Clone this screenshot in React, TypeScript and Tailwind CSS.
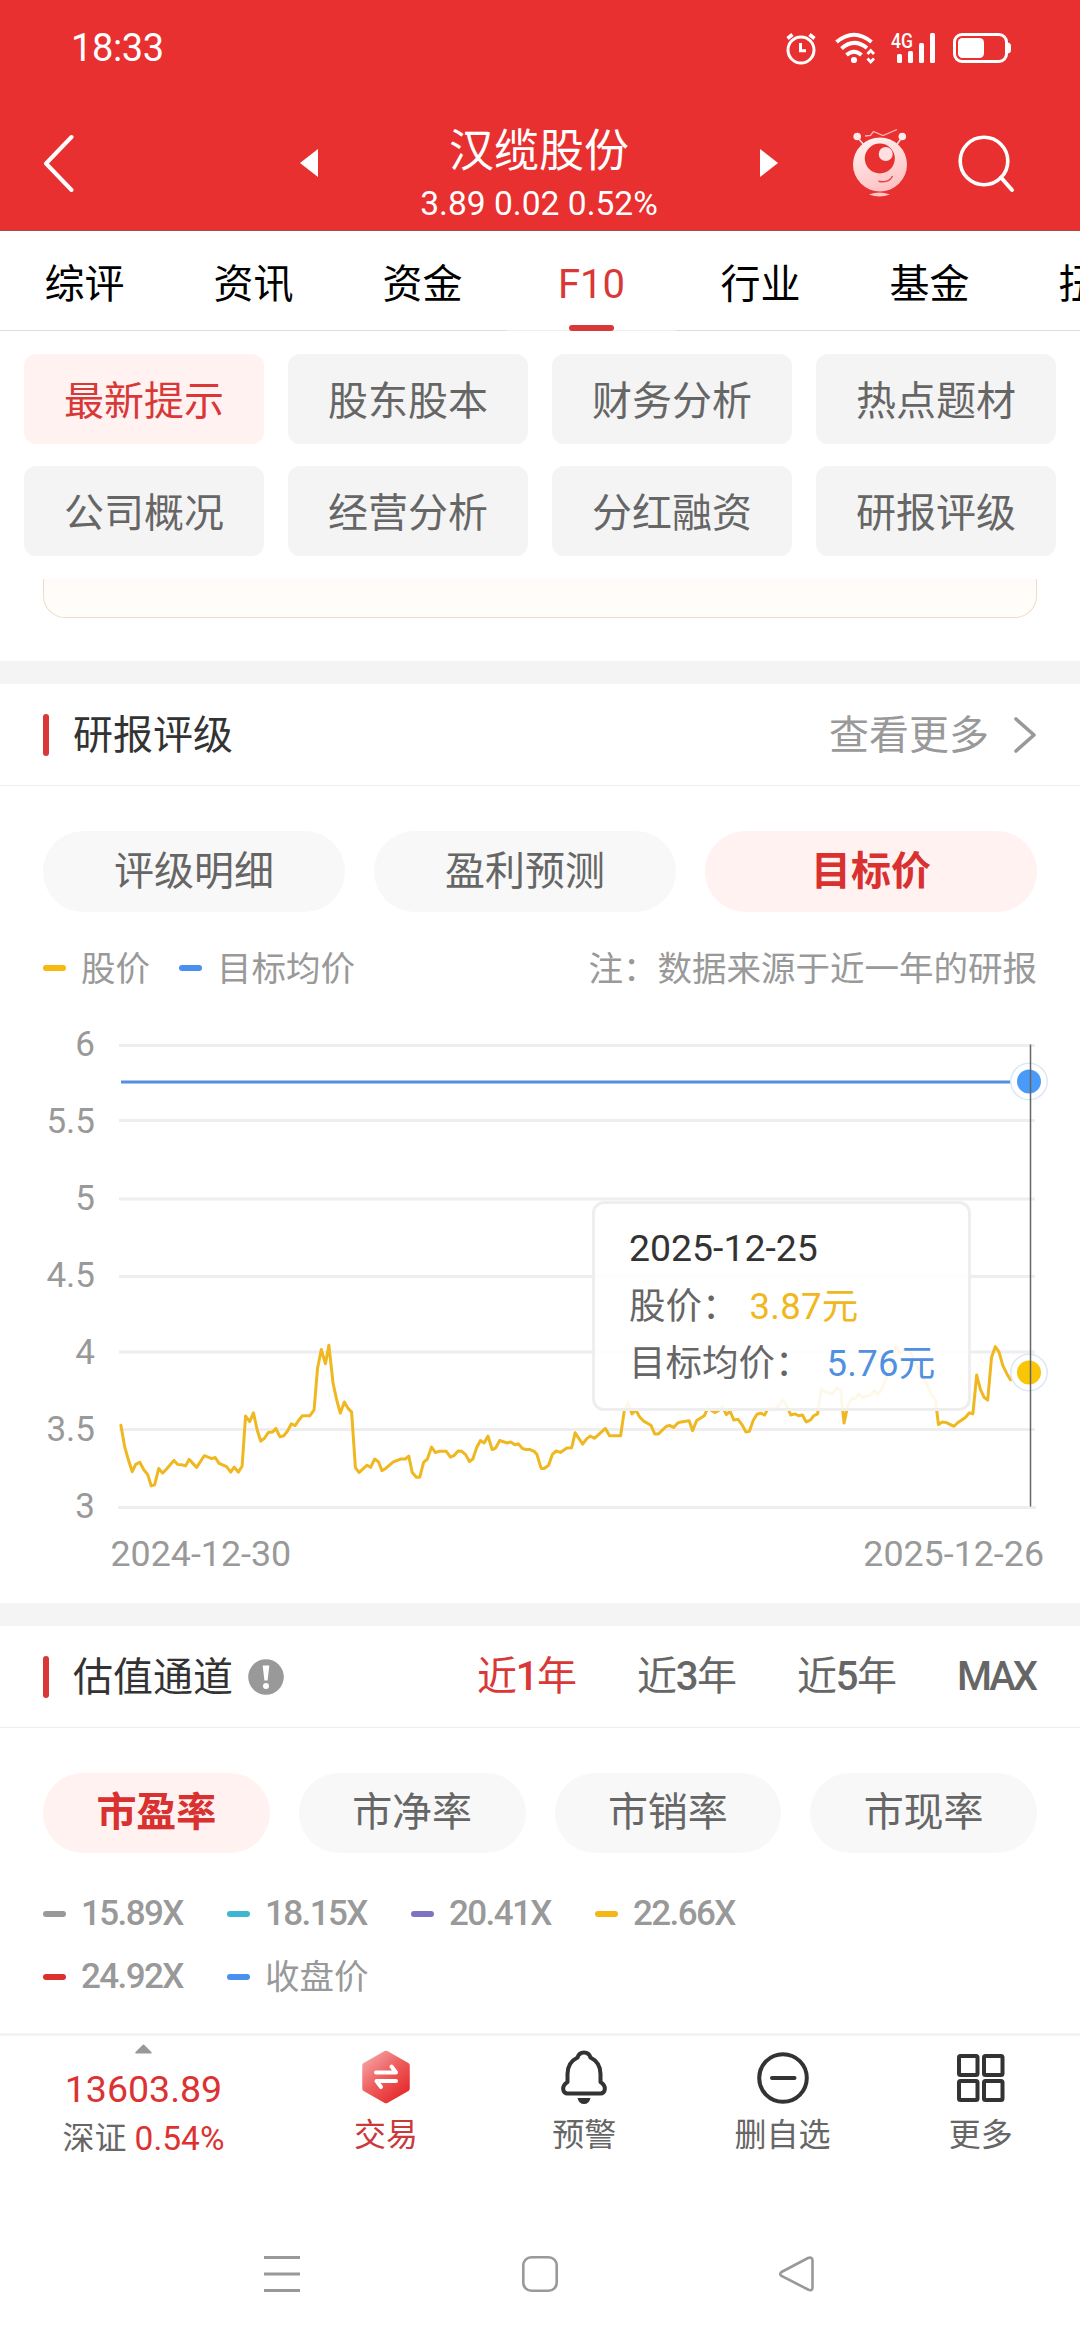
import React from 'react';

const tabs = ['综评', '资讯', '资金', 'F10', '行业', '基金', '扭亏'];

const f10Menu = [
  '最新提示',
  '股东股本',
  '财务分析',
  '热点题材',
  '公司概况',
  '经营分析',
  '分红融资',
  '研报评级',
];

const yAxis = [
  { label: '6', y: 26 },
  { label: '5.5', y: 101 },
  { label: '5', y: 179.5 },
  { label: '4.5', y: 257 },
  { label: '4', y: 332.5 },
  { label: '3.5', y: 410 },
];

const pricePoints =
  '351,1116 362,1175 373,1212 384,1244 394,1224 406,1218 417,1238 429,1252 439,1283 449,1280 461,1235 472,1248 483,1237 505,1213 516,1224 527,1225 539,1228 549,1210 571,1232 593,1200 615,1208 625,1205 636,1221 658,1230 670,1245 680,1231 692,1245 703,1229 713,1091 725,1106 736,1082 747,1130 757,1160 768,1152 779,1136 791,1135 801,1125 813,1148 824,1145 835,1132 846,1112 857,1117 867,1103 878,1090 900,1090 912,1074 922,960 933,908 945,947 955,896 967,1000 978,1048 988,1083 1000,1052 1010,1069 1021,1080 1032,1233 1043,1246 1066,1226 1076,1232 1088,1209 1099,1217 1109,1241 1120,1235 1142,1217 1164,1209 1177,1209 1187,1201 1197,1246 1209,1259 1219,1259 1230,1218 1241,1209 1253,1176 1264,1191 1275,1188 1296,1188 1308,1204 1318,1200 1330,1187 1341,1188 1352,1197 1363,1216 1373,1209 1384,1178 1395,1158 1406,1165 1417,1146 1429,1183 1439,1179 1451,1158 1473,1165 1483,1162 1495,1170 1505,1167 1517,1180 1528,1183 1539,1183 1551,1188 1559,1196 1569,1228 1572,1235 1580,1235 1593,1226 1604,1196 1615,1187 1627,1191 1646,1179 1660,1178 1670,1137 1692,1168 1704,1153 1714,1146 1726,1152 1758,1125 1770,1145 1802,1145 1813,1075 1824,1053 1835,1085 1846,1074 1857,1093 1868,1104 1890,1116 1901,1140 1912,1140 1935,1119 1945,1117 1956,1122 1968,1110 1978,1107 2001,1104 2011,1131 2023,1103 2045,1090 2055,1070 2067,1076 2076,1081 2086,1076 2098,1064 2109,1087 2120,1078 2131,1102 2143,1100 2155,1115 2166,1135 2176,1133 2187,1103 2198,1086 2209,1083 2220,1088 2230,1070 2253,1072 2274,1047 2286,1065 2296,1088 2308,1085 2319,1090 2330,1088 2341,1107 2353,1102 2363,1090 2374,1085 2385,1018 2396,1024 2418,1031 2430,1013 2441,1020 2451,1110 2462,1060 2473,1042 2483,1043 2494,1030 2505,1041 2516,1036 2528,1034 2538,1021 2549,1031 2560,1018 2572,990 2590,940 2602,898 2612,920 2628,905 2643,912 2658,945 2683,985 2703,1030 2716,1045 2725,1114 2736,1107 2748,1109 2770,1119 2780,1110 2803,1095 2815,1082 2825,1085 2836,978 2847,1018 2858,1040 2868,1047 2879,930 2890,900 2901,915 2912,952 2924,975 2934,991 2988,971';

export default function App() {
  return (
    <div className="w-[1080px] h-[2340px] flex flex-col bg-white overflow-hidden font-['Roboto','Noto_Sans_CJK_SC',sans-serif] text-[#333]">
      <header className="h-[231px] bg-[#e83030] border-b border-[#b14747] text-white">
        <StatusBar />
        <TitleBar />
      </header>

      <nav className="h-[100px] flex overflow-hidden">
        {tabs.map((tab) => (
          <Tab key={tab} label={tab} isActive={tab === 'F10'} />
        ))}
      </nav>

      <div className="grid grid-cols-4 gap-x-6 gap-y-[22px] px-6 pt-[23px]">
        {f10Menu.map((item, i) => (
          <button
            key={item}
            className={`h-[90px] rounded-xl text-[40px] leading-none pt-[6px] ${
              i === 0 ? 'bg-[#fff2f1] text-[#d93838]' : 'bg-[#f4f4f4] text-[#666]'
            }`}
          >
            {item}
          </button>
        ))}
      </div>

      <div className="mt-[23px] mx-[43px] h-[39px] rounded-b-[22px] border-x border-b border-[#efdcc6] bg-linear-to-b from-[#fffaf7] to-[#fffefb]" />

      <section className="mt-[43px] border-t-[23px] border-[#f4f4f4]">
        <div className="h-[102px] flex items-center justify-between px-[43px] border-b border-[#eee]">
          <SectionTitle>研报评级</SectionTitle>
          <div className="flex items-center gap-[24px] text-[40px] leading-none text-[#999]">
            <span className="pt-[2px]">查看更多</span>
            <svg width="24" height="36" viewBox="0 0 24 36" fill="none">
              <path
                d="M3 2 L21 18 L3 34"
                stroke="#999"
                strokeWidth="3.6"
                strokeLinecap="round"
                strokeLinejoin="round"
              />
            </svg>
          </div>
        </div>

        <div className="flex gap-[29px] px-[43px] pt-[45px]">
          <Pill className="w-[302px] h-[81px]">评级明细</Pill>
          <Pill className="w-[302px] h-[81px]">盈利预测</Pill>
          <Pill className="flex-1 h-[81px]" isActive>
            目标价
          </Pill>
        </div>

        <div className="h-[108px] flex items-center px-[43px] pt-[4px] text-[34.5px] leading-none text-[#999]">
          <Dash color="bg-[#f5b90f]" />
          <span className="ml-[15px] pt-[2px]">股价</span>
          <Dash color="bg-[#4a90ee]" className="ml-[29px]" />
          <span className="ml-[15px] pt-[2px]">目标均价</span>
          <span className="ml-auto pt-[2px]">注：数据来源于近一年的研报</span>
        </div>

        <PriceChart />
      </section>

      <section className="border-t-[23px] border-[#f4f4f4]">
        <div className="h-[102px] flex items-center px-[43px] border-b border-[#eee]">
          <SectionTitle>估值通道</SectionTitle>
          <svg className="ml-[15px]" width="36" height="36" viewBox="0 0 36 36">
            <circle cx="18" cy="18" r="17.8" fill="#999" />
            <path d="M14.7 6.5 H21.3 L19.6 21.5 H16.4 Z" fill="#fff" />
            <circle cx="18" cy="27" r="3" fill="#fff" />
          </svg>
          <div className="ml-auto flex gap-[59px] text-[40px] leading-none text-[#666]">
            <Range year="1" isActive />
            <Range year="3" />
            <Range year="5" />
            <span className="w-[80px] font-medium tracking-[-3px] whitespace-nowrap">MAX</span>
          </div>
        </div>

        <div className="grid grid-cols-4 gap-[29px] px-[43px] pt-[45px]">
          <Pill className="h-20" isActive>
            市盈率
          </Pill>
          <Pill className="h-20">市净率</Pill>
          <Pill className="h-20">市销率</Pill>
          <Pill className="h-20">市现率</Pill>
        </div>

        <div className="grid grid-cols-[repeat(4,184px)] auto-rows-[63px] pl-[43px] mt-[29px]">
          <BandLegend color="bg-[#999]" label="15.89X" />
          <BandLegend color="bg-[#3fb6d0]" label="18.15X" />
          <BandLegend color="bg-[#7d74c1]" label="20.41X" />
          <BandLegend color="bg-[#f3b816]" label="22.66X" />
          <BandLegend color="bg-[#dc302e]" label="24.92X" />
          <div className="flex items-center text-[34.5px] leading-none text-[#999]">
            <Dash color="bg-[#4a90ee]" />
            <span className="ml-[15px] pt-[2px]">收盘价</span>
          </div>
        </div>
      </section>

      <BottomBar />
      <SystemNav />
    </div>
  );
}

function StatusBar() {
  return (
    <div className="h-24 flex items-center justify-between pl-[71px] pr-[60px]">
      <span className="text-[38px] leading-none tracking-[-0.4px]">18:33</span>
      <svg width="240" height="40" viewBox="0 0 240 40" fill="none">
        <g stroke="#fff" strokeWidth="3">
          <circle cx="21" cy="22" r="13" />
          <path d="M20.5 15 V22.7 H26" />
          <path d="M7.5 10.5 L12.5 6.5 M34.5 10.5 L29.5 6.5" strokeWidth="3.6" />
        </g>
        <g stroke="#fff" strokeWidth="4">
          <path d="M56.5 14 Q74 -0.5 91.5 14" />
          <path d="M61.5 20.5 Q74 9.5 87 20" />
          <path d="M66.5 27 Q74 20.5 81.5 27" />
        </g>
        <circle cx="74" cy="32" r="3.1" fill="#fff" />
        <path
          d="M87.5 26 L90.7 22.5 L94 26 M87.5 30.5 L90.7 34 L94 30.5"
          stroke="#fff"
          strokeWidth="2.8"
        />
        <text x="111" y="20" fill="#fff" fontSize="20" fontWeight="500" textLength="22" lengthAdjust="spacingAndGlyphs">
          4G
        </text>
        <g fill="#fff">
          <rect x="117" y="26" width="5" height="9" rx="1.5" />
          <rect x="128" y="23" width="5" height="12" rx="1.5" />
          <rect x="139" y="15" width="5" height="20" rx="1.5" />
          <rect x="150" y="5" width="5" height="30" rx="1.5" />
          <rect x="178" y="10" width="26" height="20" rx="4.5" />
          <path d="M228 14.5 q3 0.5 3 3.5 v4 q0 3 -3 3.5 Z" />
        </g>
        <rect x="174.5" y="6.5" width="52" height="27" rx="7.5" stroke="#fff" strokeWidth="3" />
      </svg>
    </div>
  );
}

function TitleBar() {
  return (
    <div className="h-[134px] flex items-center pl-[43px]">
      <svg width="32" height="58" viewBox="0 0 32 58" fill="none">
        <path
          d="M28.5 3 L3 29.5 L28.5 56"
          stroke="#fff"
          strokeWidth="4"
          strokeLinecap="round"
          strokeLinejoin="round"
        />
      </svg>
      <svg className="ml-[225px]" width="18" height="28" viewBox="0 0 18 28">
        <path d="M18 0 V28 L0 14 Z" fill="#fff" />
      </svg>
      <div className="w-[442px] flex flex-col items-center pt-[23px]">
        <h1 className="text-[45px] leading-[57px]">汉缆股份</h1>
        <p className="text-[33.6px] leading-[47px]">3.89 0.02 0.52%</p>
      </div>
      <svg width="18" height="28" viewBox="0 0 18 28">
        <path d="M0 0 V28 L18 14 Z" fill="#fff" />
      </svg>
      <svg className="ml-[75px]" width="54" height="70" viewBox="0 0 54 70" fill="none">
        <defs>
          <linearGradient id="robot" x1="0.3" y1="0" x2="0.7" y2="1">
            <stop offset="0" stopColor="#fff0f0" />
            <stop offset="1" stopColor="#ffbfc0" />
          </linearGradient>
        </defs>
        <path d="M12 8 L17.5 7.5 L20.5 3.5 L30 7.5 L44 1.5" stroke="#ffb5b5" strokeWidth="1.3" />
        <path d="M5 10 L11 17 M48.5 10 L43.5 17" stroke="#ffdcdc" strokeWidth="1.6" />
        <circle cx="4.2" cy="8.5" r="3.8" fill="#ffe9e9" />
        <circle cx="49.3" cy="8.5" r="3.8" fill="#ffe9e9" />
        <circle cx="27" cy="36.5" r="27" fill="url(#robot)" />
        <circle cx="26.8" cy="30.5" r="15" fill="#e83030" />
        <circle cx="32.7" cy="26" r="7" fill="#ffdfdf" />
        <path d="M25.5 53.3 Q36 55.5 39.5 48" stroke="#e04848" strokeWidth="1.4" />
        <path d="M16 66.5 Q26.5 62.5 37 66.5 Q26.5 70.5 16 66.5 Z" fill="#ffc4c4" />
      </svg>
      <svg className="ml-[51px]" width="60" height="62" viewBox="0 0 60 62" fill="none">
        <circle cx="26" cy="29" r="23.8" stroke="#fff" strokeWidth="3.6" />
        <path d="M43 45.5 L54 58" stroke="#fff" strokeWidth="4" strokeLinecap="round" />
      </svg>
    </div>
  );
}

function Tab({ label, isActive }: { label: string; isActive: boolean }) {
  return (
    <button
      className={`w-[169px] h-[100px] shrink-0 flex flex-col items-center border-b text-[40px] whitespace-nowrap
        ${isActive ? 'text-[#d93838] border-[#eee]' : 'text-black border-[#ddd]'}`}
    >
      <span className="h-[94px] leading-[107px]">{label}</span>
      {isActive && <span className="w-[45px] h-[6px] shrink-0 rounded-full bg-[#d93838]" />}
    </button>
  );
}

function SectionTitle({ children }: { children: React.ReactNode }) {
  return (
    <div className="flex items-center gap-6">
      <span className="w-[6px] h-[42px] rounded-full bg-[#d93838]" />
      <h2 className="text-[40px] leading-none pt-[2px]">{children}</h2>
    </div>
  );
}

function Pill({
  children,
  className,
  isActive,
}: {
  children: React.ReactNode;
  className: string;
  isActive?: boolean;
}) {
  return (
    <button
      className={`rounded-full text-[40px] leading-none ${className} ${
        isActive ? 'bg-[#fff2f1] text-[#d93030] font-bold' : 'bg-[#f8f8f8] text-[#666]'
      }`}
    >
      {children}
    </button>
  );
}

function Dash({ color, className = '' }: { color: string; className?: string }) {
  return <span className={`w-[23px] h-[6px] rounded-full ${color} ${className}`} />;
}

function Range({ year, isActive }: { year: string; isActive?: boolean }) {
  return (
    <span className={`w-[101px] flex items-center ${isActive ? 'text-[#d93838]' : ''}`}>
      近<span className="w-[20px] font-medium flex justify-center">{year}</span>年
    </span>
  );
}

function BandLegend({ color, label }: { color: string; label: string }) {
  return (
    <div className="flex items-center">
      <Dash color={color} />
      <span className="ml-[15px] text-[35px] leading-none font-medium tracking-[-1.6px] text-[#999]">
        {label}
      </span>
    </div>
  );
}

function PriceChart() {
  return (
    <div className="relative h-[583px]">
      <svg width="1080" height="583" viewBox="0 0.5 1080 583" fill="none">
        {yAxis.map(({ label, y }) => (
          <path key={label} d={`M119 ${y} H1035`} stroke="#eee" strokeWidth="3" />
        ))}
        <path d="M118 488 H1036" stroke="#eee" strokeWidth="3" />

        <g fill="#999" fontSize="35" textAnchor="end">
          <text x="95" y="36">6</text>
          <text x="95" y="113">5.5</text>
          <text x="95" y="190">5</text>
          <text x="95" y="267">4.5</text>
          <text x="95" y="344">4</text>
          <text x="95" y="421">3.5</text>
          <text x="95" y="498">3</text>
        </g>
        <g fill="#999" fontSize="35.8">
          <text x="110.5" y="546">2024-12-30</text>
          <text x="1044" y="546" textAnchor="end">2025-12-26</text>
        </g>

        <path d="M121 62.5 H1030" stroke="#5090e0" strokeWidth="3" />
        <svg width="1080" height="570" viewBox="0 0 3136 1568" preserveAspectRatio="none">
          <polyline
            points={pricePoints}
            stroke="#efb820"
            strokeWidth="3"
            strokeLinejoin="round"
            strokeLinecap="round"
            vectorEffect="non-scaling-stroke"
          />
        </svg>

        <circle cx="1029" cy="62" r="19" fill="#dce8f5" />
        <circle cx="1029" cy="62" r="17.5" fill="#fff" />
        <circle cx="1029" cy="62" r="12" fill="#4a9afa" />
        <circle cx="1029" cy="353" r="19" fill="#dce8f5" />
        <circle cx="1029" cy="353" r="17.5" fill="#fff" />
        <circle cx="1029" cy="353" r="12" fill="#f8c606" />
        <path d="M1030.5 25 V487" stroke="#666" strokeWidth="1.5" />
      </svg>

      <div className="absolute left-[592px] top-[181px] w-[379px] h-[210px] rounded-xl border-[3px] border-[#eee] bg-white/90 pl-[34px] pt-[15px] text-[36.5px] leading-[57px] text-[#666] whitespace-nowrap">
        <p className="text-[37.4px] leading-[58px] text-[#333]">2025-12-25</p>
        <p className="flex pt-px">
          股价：<span className="ml-[11px] tracking-[0.3px] text-[#efb820]">3.87元</span>
        </p>
        <p className="flex">
          目标均价：<span className="ml-[15px] tracking-[0.3px] text-[#5090e0]">5.76元</span>
        </p>
      </div>
    </div>
  );
}

function BottomBar() {
  return (
    <div className="mt-auto h-[132px] shrink-0 flex border-t-[3px] border-[#f3f3f3] text-[32px] text-[#666]">
      <div className="w-[287px] flex flex-col items-center pt-2">
        <svg width="19" height="11" viewBox="0 0 19 11">
          <path d="M9.5 1.5 L17.5 9.5 H1.5 Z" fill="#999" stroke="#999" strokeWidth="2" strokeLinejoin="round" />
        </svg>
        <span className="mt-[12px] text-[37.5px] leading-[46px] text-[#dc3232]">13603.89</span>
        <span className="flex gap-2 leading-[53px]">
          深证<span className="text-[33.5px] text-[#dc3232]">0.54%</span>
        </span>
      </div>

      <BarItem label="交易" color="text-[#c93a3a]">
        <svg width="56" height="56" viewBox="0 0 56 56" fill="none">
          <defs>
            <linearGradient id="trade" x1="0" y1="0" x2="0.8" y2="1">
              <stop offset="0" stopColor="#f5abab" />
              <stop offset="0.5" stopColor="#ee6060" />
              <stop offset="1" stopColor="#e62a2c" />
            </linearGradient>
          </defs>
          <path
            d="M28 4.5 L49 16.5 V39.5 L28 51.5 L7 39.5 V16.5 Z"
            fill="url(#trade)"
            stroke="url(#trade)"
            strokeWidth="5.5"
            strokeLinejoin="round"
          />
          <path
            d="M18 23.5 H38 L33.5 17.5 M38 32 H18.5 L23 38"
            stroke="#fff"
            strokeWidth="4"
            strokeLinecap="round"
            strokeLinejoin="round"
          />
        </svg>
      </BarItem>
      <BarItem label="预警">
        <svg width="56" height="56" viewBox="0 0 56 56" fill="none">
          <path
            d="M28 3.5 C24.5 3.5 22.5 5.5 21.5 8.5 C14.5 12 11.5 18 11.5 25 V33 C5 37 6.500 44.5 11.5 44.5 H44.5 C49.5 44.5 51 37 44.5 33 V25 C44.5 18 41.5 12 34.5 8.5 C33.5 5.5 31.5 3.5 28 3.5 Z"
            stroke="#333"
            strokeWidth="4"
            strokeLinejoin="round"
          />
          <path d="M21.5 49 H34.5 Q33 55 28 55 Q23 55 21.5 49 Z" fill="#333" />
        </svg>
      </BarItem>
      <BarItem label="删自选">
        <svg width="56" height="56" viewBox="0 0 56 56" fill="none" stroke="#333" strokeWidth="4">
          <circle cx="28" cy="29" r="23.8" />
          <path d="M17 29 H39.5" strokeLinecap="round" />
        </svg>
      </BarItem>
      <BarItem label="更多">
        <svg width="56" height="56" viewBox="0 0 56 56" fill="none" stroke="#333" strokeWidth="4">
          <rect x="6" y="7" width="18.5" height="19" rx="1.5" />
          <rect x="31" y="7" width="18.5" height="19" rx="1.5" />
          <rect x="6" y="32" width="18.5" height="19" rx="1.5" />
          <rect x="31" y="32" width="18.5" height="19" rx="1.5" />
        </svg>
      </BarItem>
    </div>
  );
}

function BarItem({
  label,
  color = '',
  children,
}: {
  label: string;
  color?: string;
  children: React.ReactNode;
}) {
  return (
    <button className={`flex-1 flex flex-col items-center pt-[13px] ${color}`}>
      {children}
      <span className="mt-[6px] leading-[48px]">{label}</span>
    </button>
  );
}

function SystemNav() {
  return (
    <div className="h-[175px] shrink-0 flex items-start justify-between pl-[263px] pr-[264px] pt-[90px]">
      <svg width="38" height="38" viewBox="0 0 38 38" stroke="#999" strokeWidth="3">
        <path d="M1 2.5 H37 M1 19 H37 M1 35.5 H37" />
      </svg>
      <svg width="38" height="38" viewBox="0 0 38 38" fill="none" stroke="#999" strokeWidth="2.6">
        <rect x="2.3" y="2.3" width="33.4" height="33.4" rx="8" />
      </svg>
      <svg width="38" height="38" viewBox="0 0 38 38" fill="none" stroke="#999" strokeWidth="2.6">
        <path d="M3.5 17 L30 3 Q34.5 1.5 34.5 5.5 V32.5 Q34.5 36.5 30 34.5 L3.5 21 Q1 19 3.5 17 Z" />
      </svg>
    </div>
  );
}
